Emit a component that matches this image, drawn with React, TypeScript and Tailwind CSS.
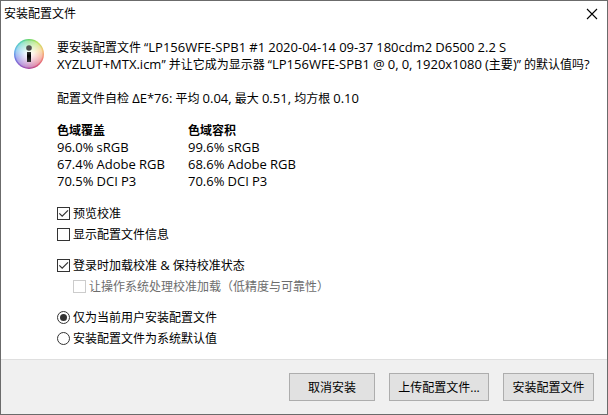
import React, { useState } from "react"

const coverage = [
  ["96.0% sRGB", "99.6% sRGB"],
  ["67.4% Adobe RGB", "68.6% Adobe RGB"],
  ["70.5% DCI P3", "70.6% DCI P3"],
]

// hues clockwise from the top
const wheel = ["#58d058", "#b0e050", "#f0c060", "#f07868", "#d03c68", "#a03090", "#8448c0", "#5c68e0", "#50b0e8", "#40ccb0"]

function InfoIcon() {
  return (
    <svg viewBox="0 0 30 30" className="h-[30px] w-[30px] shrink-0" aria-hidden="true">
      <defs>
        <radialGradient id="glow">
          <stop offset="0" stopColor="#fff" />
          <stop offset="0.3" stopColor="#fff" stopOpacity="0.85" />
          <stop offset="0.86" stopColor="#fff" stopOpacity="0.45" />
          <stop offset="0.95" stopColor="#fff" stopOpacity="0.1" />
        </radialGradient>
        <linearGradient id="glyph" x1="0" y1="0" x2="0" y2="1">
          <stop offset="0" stopColor="#333" />
          <stop offset="0.4" stopColor="#000" />
          <stop offset="1" stopColor="#333" />
        </linearGradient>
        <clipPath id="disc">
          <circle cx="15" cy="15" r="15" />
        </clipPath>
      </defs>
      <foreignObject width="30" height="30" clipPath="url(#disc)">
        <div className="h-[30px] w-[30px]" style={{ background: `conic-gradient(${wheel.join(",")},${wheel[0]})` }} />
      </foreignObject>
      <circle cx="15" cy="15" r="15" fill="url(#glow)" />
      <circle cx="15" cy="9" r="2.8" fill="#505050" />
      <rect x="13" y="13" width="4" height="10" fill="url(#glyph)" />
    </svg>
  )
}

// Latin runs are set one step larger than the Chinese around them
function Mixed({ text }: { text: string }) {
  return (
    <>
      {text.split(/([!-~Δ]+)/).map((part, i) =>
        i % 2 ? (
          <span key={i} className="text-[13px] leading-none">
            {part}
          </span>
        ) : (
          part
        )
      )}
    </>
  )
}

type OptionProps = {
  label: string
  checked: boolean
  disabled?: boolean
  onChange?: () => void
}

function CheckOption({ label, checked, disabled, onChange }: OptionProps) {
  return (
    <label className={`flex h-[21px] items-center gap-[3px] ${disabled ? "ml-4 text-[#6d6d6d]" : ""}`}>
      <span className="grid">
        <input
          type="checkbox"
          checked={checked}
          disabled={disabled}
          onChange={onChange}
          className="col-start-1 row-start-1 h-[13px] w-[13px] appearance-none border border-[#333] bg-white disabled:border-[#ccc]"
        />
        {checked && (
          <svg viewBox="0 0 13 13" className="pointer-events-none col-start-1 row-start-1 h-[13px] w-[13px]">
            <path d="M2.3 6.3 5.2 9.2 11 3.4" fill="none" stroke="#333" strokeWidth="1.2" />
          </svg>
        )}
      </span>
      <span>
        <Mixed text={label} />
      </span>
    </label>
  )
}

function RadioOption({ label, checked, onChange }: OptionProps) {
  return (
    <label className="flex h-[21px] items-center gap-[3px]">
      <span className="grid place-items-center">
        <input
          type="radio"
          name="scope"
          checked={checked}
          onChange={onChange}
          className="col-start-1 row-start-1 h-[13px] w-[13px] appearance-none rounded-full border border-[#333] bg-white"
        />
        {checked && <span className="pointer-events-none col-start-1 row-start-1 h-[7px] w-[7px] rounded-full bg-[#333]" />}
      </span>
      {label}
    </label>
  )
}

function DialogButton({ children, className }: { children: React.ReactNode; className: string }) {
  return (
    <button type="button" className={`h-7 border border-[#adadad] bg-[#e1e1e1] hover:bg-[#e5f1fb] ${className}`}>
      {children}
    </button>
  )
}

export default function App() {
  const [preview, setPreview] = useState(true)
  const [details, setDetails] = useState(false)
  const [loadOnLogin, setLoadOnLogin] = useState(true)
  const [scope, setScope] = useState("user")

  return (
    <div className="flex min-h-screen flex-col border border-[#6b6b6b] bg-white font-['Open_Sans','Noto_Sans_CJK_SC',sans-serif] text-xs leading-[17px] text-black">
      {/* Title bar */}
      <header className="flex h-[25px] items-center justify-between pr-[9px] pl-[3px]">
        <h1>安装配置文件</h1>
        <button type="button" aria-label="关闭">
          <svg viewBox="0 0 12 12" className="h-3 w-3">
            <path d="M1 1 11 11M11 1 1 11" stroke="#000" strokeWidth="1.1" />
          </svg>
        </button>
      </header>

      {/* Message and options */}
      <main className="flex flex-1 gap-[13px] pt-[13px] pr-3 pb-[10px] pl-[13px]">
        <InfoIcon />
        <div className="flex-1">
          <p>
            <Mixed text="要安装配置文件 “LP156WFE-SPB1 #1 2020-04-14 09-37 180cdm2 D6500 2.2 S" />
            <br />
            <Mixed text="XYZLUT+MTX.icm” 并让它成为显示器 “LP156WFE-SPB1 @ 0, 0, 1920x1080 (主要)” 的默认值吗?" />
          </p>
          <p className="mt-[17px]">
            <Mixed text="配置文件自检 ΔE*76: 平均 0.04, 最大 0.51, 均方根 0.10" />
          </p>

          <table className="mt-[15px] text-left">
            <thead>
              <tr>
                <th className="w-[131px] p-0 font-bold">色域覆盖</th>
                <th className="p-0 font-bold">色域容积</th>
              </tr>
            </thead>
            <tbody>
              {coverage.map(([gamut, volume]) => (
                <tr key={gamut}>
                  <td className="p-0">
                    <Mixed text={gamut} />
                  </td>
                  <td className="p-0">
                    <Mixed text={volume} />
                  </td>
                </tr>
              ))}
            </tbody>
          </table>

          <div className="mt-[13px] flex flex-col gap-[10px]">
            <div>
              <CheckOption label="预览校准" checked={preview} onChange={() => setPreview(!preview)} />
              <CheckOption label="显示配置文件信息" checked={details} onChange={() => setDetails(!details)} />
            </div>
            <div>
              <CheckOption label="登录时加载校准 & 保持校准状态" checked={loadOnLogin} onChange={() => setLoadOnLogin(!loadOnLogin)} />
              <CheckOption label="让操作系统处理校准加载（低精度与可靠性）" checked={false} disabled />
            </div>
            <div>
              <RadioOption label="仅为当前用户安装配置文件" checked={scope === "user"} onChange={() => setScope("user")} />
              <RadioOption label="安装配置文件为系统默认值" checked={scope === "system"} onChange={() => setScope("system")} />
            </div>
          </div>
        </div>
      </main>

      {/* Actions */}
      <footer className="flex justify-end gap-[14px] border-t border-[#dfdfdf] bg-[#f0f0f0] p-[13px]">
        <DialogButton className="w-[86px]">取消安装</DialogButton>
        <DialogButton className="w-[100px]">上传配置文件...</DialogButton>
        <DialogButton className="w-[91px]">安装配置文件</DialogButton>
      </footer>
    </div>
  )
}
